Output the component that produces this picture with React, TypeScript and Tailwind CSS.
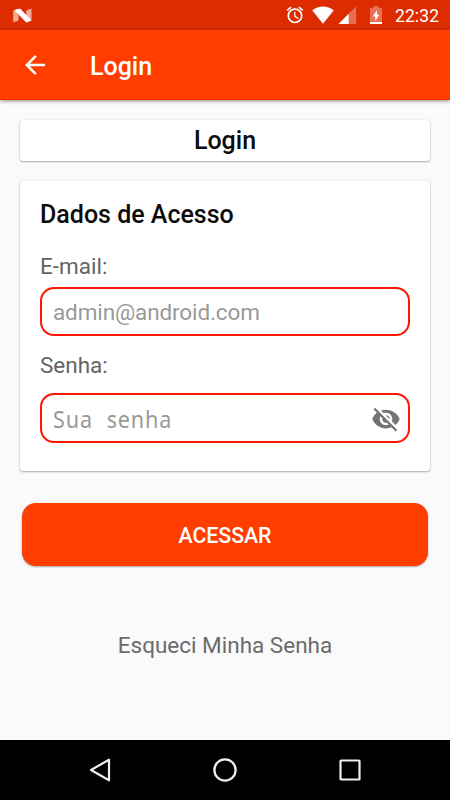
import React from "react";

function StatusBar() {
  return (
    <div className="flex h-[30px] items-center bg-[#dd2c00] text-white">
      <svg className="ml-[13px] h-[15px] w-[19px]" viewBox="0 0 19 15">
        <path d="M0.2 2.6 5.5 0.6V12.4L0.2 14.4ZM13.2 2.6 18.5 0.6V12.4L13.2 14.4Z" fill="#fff" fillOpacity=".6" />
        <path d="M1.6 2.2Q5.2 .2 7.4 .8L18.4 12.6 13.2 14.5Z" fill="#fff" />
      </svg>
      <svg className="ml-[253px] h-5 w-5" viewBox="0 0 24 24" fill="currentColor">
        <path d="M22 5.72l-4.6-3.86-1.29 1.53 4.6 3.86L22 5.72zM7.88 3.39L6.6 1.86 2 5.71l1.29 1.53 4.59-3.85zM12.5 8H11v6l4.75 2.85.75-1.23-4-2.37V8zM12 4c-4.97 0-9 4.03-9 9s4.02 9 9 9c4.97 0 9-4.03 9-9s-4.03-9-9-9zm0 16c-3.87 0-7-3.13-7-7s3.13-7 7-7 7 3.13 7 7-3.13 7-7 7z" />
      </svg>
      <svg className="ml-[7px] h-[18px] w-[22px]" viewBox="0 0 23 18" preserveAspectRatio="none">
        <path d="M0.2 4.2C6.8-.9 16.2-.9 22.8 4.2L11.5 17.8Z" fill="#fff" />
      </svg>
      <svg className="ml-1 h-[18px] w-[19px]" viewBox="0 0 19 18">
        <path d="M0.5 18 18.2.2V18Z" fill="#fff" fillOpacity=".32" />
        <path d="M0.5 18 10.7 7.7V18Z" fill="#fff" />
      </svg>
      <svg className="ml-[13px] h-[18px] w-3" viewBox="0 0 12 18">
        <path d="M3.5 0h5v2H12v14H0V2h3.5Z" fill="#fff" fillOpacity=".32" />
        <path d="M0 16h12v2H0ZM7 4 2.8 10.4h2.5V15l4-6.6H7Z" fill="#fff" />
      </svg>
      <span className="ml-[13px] mt-[2px] text-[17.5px] leading-5 tracking-[0.1px]">22:32</span>
    </div>
  );
}

function AppBar() {
  return (
    <div className="flex h-[70px] items-center border-b border-[#f52b00] bg-[#ff3d00] text-white shadow-[0_1px_4px_rgba(0,0,0,0.45)]">
      <svg className="ml-5 h-[30px] w-[30px]" viewBox="0 0 24 24" fill="currentColor">
        <path d="M20 11H7.83l5.59-5.59L12 4l-8 8 8 8 1.41-1.41L7.83 13H20v-2z" />
      </svg>
      <h1 className="ml-10 mt-[4px] text-[25px] font-medium leading-[30px]">Login</h1>
    </div>
  );
}

function NavBar() {
  return (
    <nav className="flex h-[60px] items-center justify-between bg-black pl-[88px] pr-[88px]">
      <svg className="h-6 w-6" viewBox="0 0 24 24" fill="none" stroke="#eee" strokeWidth="2.2" strokeLinejoin="round">
        <path d="M3 12 21 1.7V22.3Z" />
      </svg>
      <svg className="h-6 w-6" viewBox="0 0 24 24" fill="none" stroke="#eee" strokeWidth="2.3">
        <circle cx="12" cy="12" r="10.6" />
      </svg>
      <svg className="h-6 w-6" viewBox="0 0 24 24" fill="none" stroke="#eee" strokeWidth="2.2">
        <rect x="2.5" y="2.5" width="19" height="19" rx=".6" />
      </svg>
    </nav>
  );
}

export default function App() {
  return (
    <div className="flex h-[800px] w-[450px] flex-col overflow-hidden bg-[#fafafa] font-['Roboto',sans-serif]">
      <StatusBar />
      <AppBar />
      <main className="flex flex-1 flex-col px-5 pt-5">
        <div className="h-[41px] rounded-[3px] bg-white text-center text-[25px] font-medium leading-[42px] text-[#0b0b0b] shadow-[0_1px_2px_rgba(0,0,0,0.3),0_0_1px_rgba(0,0,0,0.25)]">
          Login
        </div>
        <section className="mt-5 flex h-[290px] flex-col rounded-[3px] bg-white px-5 shadow-[0_1px_2px_rgba(0,0,0,0.3),0_0_1px_rgba(0,0,0,0.25)]">
          <h2 className="mt-[19px] text-[25px] font-medium leading-[30px] text-[#0b0b0b]">Dados de Acesso</h2>
          <label htmlFor="email" className="mt-[22px] text-[22.5px] leading-[28px] text-[#646464]">E-mail:</label>
          <div className="mt-[7px] flex h-[49px] shrink-0 items-center rounded-[14px] border-2 border-[#ff1500] px-[11px]">
            <input id="email" className="w-full text-[22.5px] leading-[28px] tracking-[-0.12px] outline-none placeholder:text-[#999]" placeholder="admin@android.com" />
          </div>
          <label htmlFor="senha" className="mt-[15px] text-[22.5px] leading-[28px] text-[#646464]">Senha:</label>
          <div className="mt-[14px] flex h-[50px] shrink-0 items-center rounded-[14px] border-2 border-[#ff1500] pl-[11px] pr-[7px]">
            <input id="senha" className="min-w-0 flex-1 origin-left scale-x-[0.92] pt-px font-['Noto_Sans',sans-serif] text-[23.5px] leading-[28px] tracking-[0.9px] [word-spacing:8px] outline-none placeholder:text-[#999]" placeholder="Sua senha" />
            <svg className="mt-px h-[30px] w-[30px]" viewBox="0 0 24 24" fill="#747474">
              <path d="M12 7c2.76 0 5 2.24 5 5 0 .65-.13 1.26-.36 1.83l2.92 2.92c1.51-1.26 2.7-2.89 3.43-4.75-1.73-4.39-6-7.5-11-7.5-1.4 0-2.74.25-3.98.7l2.16 2.16C10.74 7.13 11.35 7 12 7zM2 4.27l2.28 2.28.46.46C3.08 8.3 1.78 10.02 1 12c1.73 4.39 6 7.5 11 7.5 1.55 0 3.03-.3 4.38-.84l.42.42L19.73 22 21 20.73 3.27 3 2 4.27zM7.53 9.8l1.55 1.55c-.05.21-.08.43-.08.65 0 1.66 1.34 3 3 3 .22 0 .44-.03.65-.08l1.55 1.55c-.67.33-1.41.53-2.2.53-2.76 0-5-2.24-5-5 0-.79.2-1.53.53-2.2zm4.31-.78l3.15 3.15.02-.16c0-1.66-1.34-3-3-3l-.17.01z" />
            </svg>
          </div>
        </section>
        <button className="mx-[2px] mt-8 h-[63px] rounded-[14px] bg-[#ff3d00] pt-[2px] text-[21.25px] font-medium text-white shadow-[0_1px_2px_rgba(0,0,0,0.35)]">
          ACESSAR
        </button>
        <a className="mt-[65px] text-center text-[22.5px] leading-[28px] text-[#6b6b6b]">Esqueci Minha Senha</a>
      </main>
      <NavBar />
    </div>
  );
}
